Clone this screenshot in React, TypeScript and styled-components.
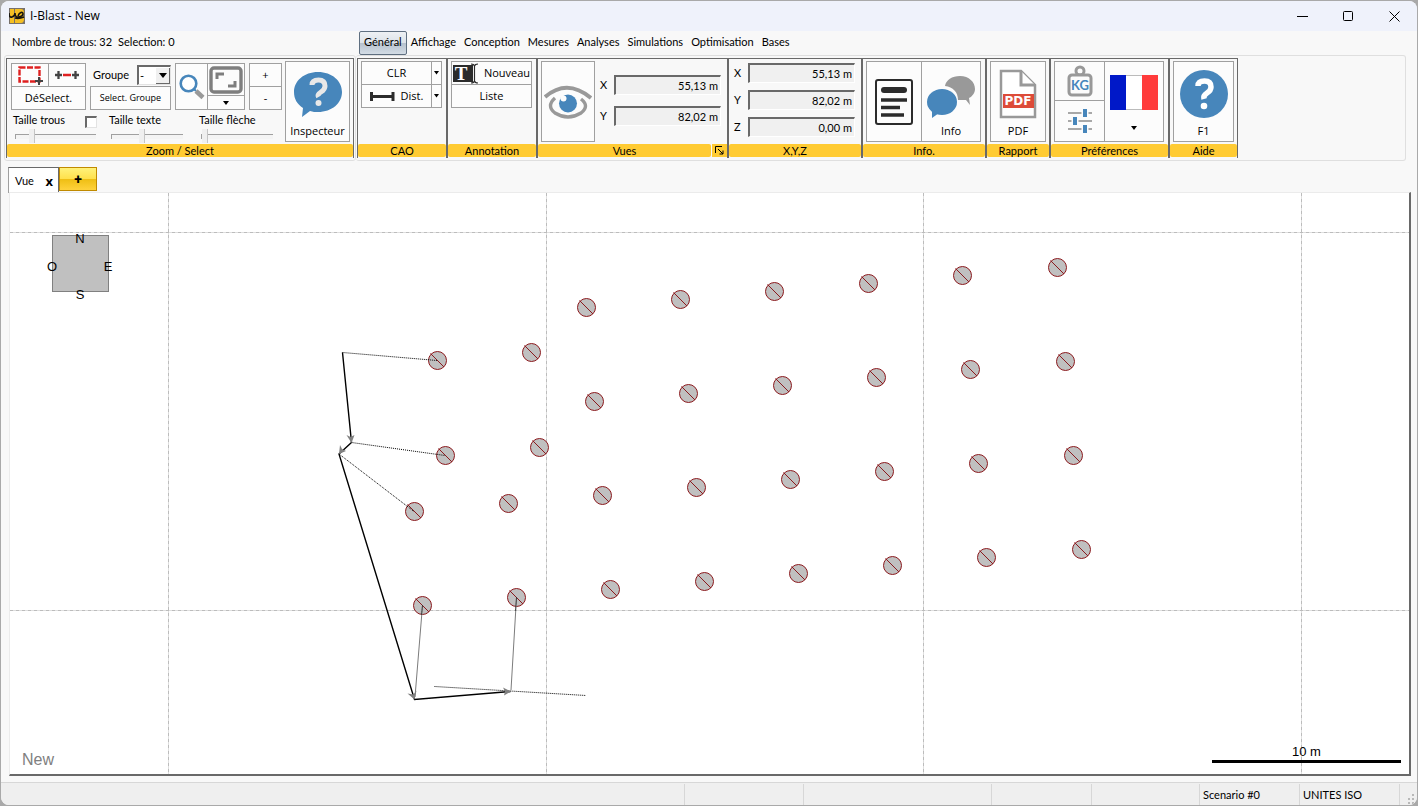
import React from "react";
import styled, { createGlobalStyle, css } from "styled-components";

const color = {
  frame: "#a9a9a9",
  chrome: "#f8f8f8",
  title: "#eff2fb",
  gold: "#ffcb33",
  line: "#a0a0a0",
  dark: "#696969",
  soft: "#dfdfdf",
  blue: "#4786bb",
  grey: "#999999",
};

const GlobalStyle = createGlobalStyle`
  * { box-sizing: border-box; }
  body {
    margin: 0;
    background: ${color.frame};
    font: 11px/14px Lato, "Liberation Sans", sans-serif;
    color: #000;
  }
  button, input, select { font: inherit; color: inherit; margin: 0; }
`;

const handFont = css`
  font-family: "Open Sans", "Noto Sans", sans-serif;
`;

/* ---------- window ---------- */

const Desktop = styled.div`
  display: flex;
  min-height: 100vh;
  padding: 1px;
`;

const Window = styled.div`
  flex: 1;
  min-width: 0;
  display: flex;
  flex-direction: column;
  background: ${color.chrome};
  border-radius: 8px;
  overflow: hidden;
`;

const TitleBar = styled.header`
  display: flex;
  align-items: center;
  height: 30px;
  padding-left: 8px;
  background: ${color.title};
`;

const Title = styled.h1`
  flex: 1;
  margin: 0 0 0 5px;
  font: 12px/16px "Open Sans", "Noto Sans", sans-serif;
`;

const WindowButton = styled.button`
  display: flex;
  align-items: center;
  justify-content: center;
  width: 46px;
  height: 30px;
  padding: 0;
  border: 0;
  background: none;
`;

/* ---------- menu ---------- */

const MenuRow = styled.div`
  display: flex;
  align-items: center;
  height: 24px;
`;

const Counters = styled.div`
  display: flex;
  gap: 6px;
  flex: 0 0 358px;
  padding: 0 0 2px 11px;
`;

const Menu = styled.nav`
  display: flex;
`;

const MenuTab = styled.button<{ $active?: boolean }>`
  height: 24px;
  padding: 0 3px 2px;
  border: 1px solid transparent;
  border-radius: 2px;
  background: none;
  white-space: nowrap;
  ${(p) =>
    p.$active &&
    css`
      padding: 0 4px 2px;
      border-color: #5f6f80;
      background: linear-gradient(#eef1f4 0%, #dde3e9 48%, #b6c1cd 50%, #d3dce5 100%);
    `}
`;

/* ---------- ribbon ---------- */

const Ribbon = styled.div`
  display: flex;
  padding: 0 11px 0 3px;
`;

const RibbonPanel = styled.div<{ $grow?: boolean }>`
  display: flex;
  padding: 2px 1px;
  border: 1px solid ${color.soft};
  border-radius: 3px;
  ${(p) => p.$grow && "flex: 1; border-left: 0;"}
`;

const Group = styled.section<{ $width: number }>`
  display: flex;
  flex-direction: column;
  width: ${(p) => p.$width}px;
  height: 100px;
  border: 1px solid ${color.dark};
  border-bottom: 0;
`;

const GroupBody = styled.div`
  flex: 1;
  display: flex;
  min-height: 0;
  padding: 2px 3px 0;
`;

const Caption = styled.footer`
  display: flex;
  flex: none;
  height: 13px;
  margin-bottom: 1px;
  gap: 1px;
`;

const CaptionText = styled.h2`
  flex: 1;
  margin: 0;
  border-radius: 2px;
  background: ${color.gold};
  font: inherit;
  text-align: center;
`;

const CaptionButton = styled.button`
  display: flex;
  align-items: center;
  justify-content: center;
  width: 15px;
  padding: 0;
  border: 0;
  background: ${color.gold};
`;

const Tool = styled.button<{ $w?: number; $h?: number; $small?: boolean }>`
  ${handFont}
  display: flex;
  flex-direction: column;
  align-items: center;
  justify-content: center;
  ${(p) => (p.$w ? `width: ${p.$w}px;` : "flex: 1;")}
  height: ${(p) => p.$h ?? 24}px;
  padding: 0;
  border: 1px solid ${color.line};
  background: #fcfcfc;
  font-size: ${(p) => (p.$small ? 9 : 11)}px;
  line-height: 14px;
  white-space: nowrap;
  & > svg { flex: none; }
`;

const ToolRow = styled.div`
  display: flex;
  & > * + * { margin-left: -1px; }
`;

const ToolStack = styled.div<{ $w: number }>`
  display: flex;
  flex-direction: column;
  width: ${(p) => p.$w}px;
  & > * + * { margin-top: -1px; }
  & > button { flex: none; width: 100%; }
`;

const BigTool = styled(Tool)`
  height: 81px;
  justify-content: flex-end;
  padding-bottom: 3px;
  gap: 5px;
`;

const Inline = styled.span`
  display: flex;
  align-items: center;
  gap: 6px;
`;

const SelectTools = styled.div`
  flex: 1;
  padding: 2px 0 0 1px;
`;

const SelectRow = styled.div`
  display: flex;
  gap: 4px;
`;

const GroupPick = styled.label`
  display: flex;
  align-items: center;
  justify-content: space-between;
  height: 24px;
  padding-left: 3px;
`;

const SelectBox = styled.span`
  display: flex;
  align-items: center;
  width: 34px;
  height: 20px;
  border: 1px solid #e3e3e3;
  border-top: 2px solid ${color.dark};
  border-left: 2px solid ${color.dark};
  background: #fff;
`;

const Select = styled.select`
  flex: 1;
  min-width: 0;
  height: 16px;
  padding: 0 0 0 1px;
  border: 0;
  appearance: none;
  background: transparent;
`;

const DropMark = styled.span`
  display: flex;
  align-items: center;
  justify-content: center;
  width: 14px;
  height: 16px;
  border-right: 1px solid ${color.dark};
  border-bottom: 1px solid ${color.dark};
  background: #f0f0f0;
`;

const Sliders = styled.div`
  display: grid;
  grid-template-columns: 96px 90px 80px;
  padding: 3px 0 0 2px;
`;

const SliderField = styled.div<{ $track: number }>`
  display: grid;
  grid-template-columns: ${(p) => p.$track}px;
  align-content: start;
`;

const SliderHead = styled.div`
  display: flex;
  justify-content: space-between;
  height: 16px;
  white-space: nowrap;
`;

const Check = styled.input`
  flex: none;
  width: 12px;
  height: 12px;
  margin: 3px -3px 0 0;
  appearance: none;
  border: 1px solid #e3e3e3;
  border-top: 2px solid ${color.dark};
  border-left: 2px solid ${color.dark};
  background: #fff;
`;

const Range = styled.input`
  width: 100%;
  height: 15px;
  margin-left: 2px;
  appearance: none;
  background: transparent;
  &::-webkit-slider-runnable-track {
    height: 5px;
    border-top: 1px solid ${color.line};
    border-left: 1px solid ${color.line};
    background: #f4f4f4;
  }
  &::-webkit-slider-thumb {
    appearance: none;
    width: 6px;
    height: 14px;
    margin-top: -6px;
    border-right: 1px solid #c4c4c4;
    background: #efefef;
  }
`;

const Fields = styled.div<{ $gap: number; $top: number; $left: number }>`
  flex: 1;
  display: flex;
  flex-direction: column;
  gap: ${(p) => p.$gap}px;
  padding: ${(p) => p.$top}px 3px 0 ${(p) => p.$left}px;
`;

const Coord = styled.label`
  display: grid;
  grid-template-columns: 14px 1fr;
  align-items: center;
`;

const CoordInput = styled.input`
  width: 100%;
  height: 20px;
  padding: 0 2px 1px;
  border: 1px solid #fff;
  border-top: 2px solid ${color.dark};
  border-left: 2px solid ${color.dark};
  background: #f0f0f0;
  text-align: right;
`;

/* ---------- view ---------- */

const Tabs = styled.div`
  display: flex;
  height: 31px;
  padding: 6px 0 0 7px;
`;

const ViewTab = styled.div`
  display: flex;
  align-items: center;
  justify-content: space-between;
  width: 51px;
  height: 26px;
  padding: 0 3px 0 6px;
  border: 1px solid ${color.dark};
  border-bottom: 0;
  border-left-color: ${color.line};
  background: #fff;
`;

const CloseTab = styled.button`
  padding: 0 2px;
  border: 0;
  background: none;
  font: 700 13px/14px "Open Sans", sans-serif;
`;

const AddTab = styled.button`
  width: 38px;
  height: 24px;
  padding: 0;
  border: 1px solid #c08a00;
  background: linear-gradient(#fff27a 0%, #ffe14d 48%, #efbf14 52%, #ffd23c 100%);
  font: 700 14px/14px Roboto, sans-serif;
`;

const Canvas = styled.main`
  position: relative;
  flex: 1;
  min-height: 360px;
  margin: 0 6px 6px 8px;
  border: 1px solid #ebebeb;
  border-right: 2px solid ${color.dark};
  border-bottom: 2px solid ${color.dark};
  background: #fff;
  overflow: hidden;
`;

const Plan = styled.svg`
  position: absolute;
  inset: 0;
  width: 100%;
  height: 100%;
  font: 13px "Liberation Sans", Arial, sans-serif;
`;

const ViewName = styled.span`
  position: absolute;
  left: 12px;
  bottom: 4px;
  color: #808080;
  font: 16px/20px "Liberation Sans", Arial, sans-serif;
`;

const Scale = styled.div`
  position: absolute;
  right: 8px;
  bottom: 11px;
  width: 189px;
  border-bottom: 3px solid #000;
  font: 13px/16px "Liberation Sans", Arial, sans-serif;
  text-align: center;
`;

/* ---------- status ---------- */

const StatusBar = styled.footer`
  display: flex;
  justify-content: flex-end;
  height: 23px;
  border-top: 1px solid #d7d7d7;
  background: #efefef;
`;

const StatusCell = styled.div<{ $w: number }>`
  width: ${(p) => p.$w}px;
  margin-top: 1px;
  padding: 4px 3px 0;
  border-left: 1px solid #d7d7d7;
  white-space: nowrap;
`;

const Grip = styled.svg`
  align-self: flex-end;
`;

const LangCaret = styled.span`
  display: flex;
  padding: 11px 0 8px;
`;

/* ---------- icons ---------- */

const Caret = ({ size = 6 }: { size?: number }) => (
  <svg width={size} height={size / 2 + 1} viewBox="0 0 8 4" preserveAspectRatio="none">
    <path d="M0 0h8L4 4z" fill="#000" />
  </svg>
);

const Logo = () => (
  <svg width="16" height="16" viewBox="0 0 16 16">
    <path d="M0 0h16v16H0z" fill="#77706a" />
    <path d="M1 1h4v14H1zM6 1h6q3 0 3 3.500q0 2-1 3q1 1 1 3.500q0 4-3 4H6z" fill="#f5bf22" />
    <path d="M0 5q0 5 3 4t3-4M6 5q0 5 4 4t4-3q0-2-2-1.500T9 8M6 10q4 1 9-1" fill="none" stroke="#17150f" strokeWidth="1.600" />
  </svg>
);

const MarqueeIcon = () => (
  <svg width="26" height="20" viewBox="0 0 26 20">
    <path d="M2.500 2.500h20v14h-20z" fill="none" stroke="#de2020" strokeWidth="2.400" strokeDasharray="6 1.500" />
    <path d="M22 12v8M18 16h8" stroke="#444" strokeWidth="2" />
  </svg>
);

const LinkPickIcon = () => (
  <svg width="26" height="12" viewBox="0 0 26 12">
    <path d="M9 6h8" stroke="#de2020" strokeWidth="2.500" />
    <path d="M1 6h7M18 6h7M4.500 2v8M21.500 2v8" stroke="#444" strokeWidth="2.300" />
  </svg>
);

const LensIcon = () => (
  <svg width="26" height="26" viewBox="0 0 26 26">
    <circle cx="9.500" cy="9.500" r="7.800" fill="#fff" stroke={color.blue} strokeWidth="2.600" />
    <path d="M15 15l2 2" stroke={color.blue} strokeWidth="2" />
    <path d="M17 17l7 6.500" stroke={color.grey} strokeWidth="4.500" />
  </svg>
);

const FitIcon = () => (
  <svg width="34" height="28" viewBox="0 0 34 28">
    <rect x="2" y="2" width="30" height="24" rx="3" fill="#fcfcfc" stroke="#7e7e7e" strokeWidth="3.400" />
    <path d="M8 13V8h7M26 15v5h-7" fill="none" stroke="#7e7e7e" strokeWidth="3" />
  </svg>
);

const HelpBubble = () => (
  <svg width="50" height="48" viewBox="0 0 50 48">
    <path d="M25 1C11 1 1 10 1 21c0 7 3 12 9 16l-1 9 8-6c3 1 5 1 8 1 14 0 24-9 24-20S39 1 25 1z" fill={color.blue} />
    <path d="M19 14q0-5 6.500-5t6.500 6q0 3.500-4 6T25.500 26" fill="none" stroke="#e8e8e8" strokeWidth="5" />
    <circle cx="25.500" cy="32" r="3" fill="#e8e8e8" />
  </svg>
);

const HelpDisc = () => (
  <svg width="50" height="50" viewBox="0 0 50 50">
    <circle cx="25" cy="25" r="24" fill={color.blue} />
    <path d="M19 17q0-5 6.500-5t6.500 6q0 3.500-4 6T25 30" fill="none" stroke="#fff" strokeWidth="5.500" />
    <circle cx="25" cy="37" r="3.300" fill="#fff" />
  </svg>
);

const DistIcon = () => (
  <svg width="25" height="9" viewBox="0 0 25 9">
    <path d="M1 4.500h23M1.500 0v9M23 0v9" stroke="#2b2b2b" strokeWidth="3" />
  </svg>
);

const TextIcon = () => (
  <svg width="25" height="21" viewBox="0 0 25 21">
    <path d="M0 2h22v17H0z" fill="#2b2b2b" />
    <text x="8" y="17" fill="#fff" fontFamily="Liberation Serif, serif" fontWeight="700" fontSize="19" textAnchor="middle">T</text>
    <path d="M21.500 1v19" stroke="#fff" strokeWidth="3" />
    <path d="M18 1q3 0 3.500 2Q22 1 25 1M18 20q3 0 3.500-2q.5 2 3.500 2M21.500 2v17" fill="none" stroke="#2b2b2b" strokeWidth="1.200" />
  </svg>
);

const EyeIcon = () => (
  <svg width="48" height="34" viewBox="0 0 48 34">
    <path d="M1 12Q23-7 47 13" fill="none" stroke={color.grey} strokeWidth="4" />
    <path d="M11 13Q2 21 11 28q13 8 26 0q9-7 0-14" fill="none" stroke={color.grey} strokeWidth="3.400" />
    <circle cx="24" cy="18.500" r="9" fill={color.blue} />
    <circle cx="19.500" cy="13.500" r="3" fill="#fcfcfc" />
  </svg>
);

const PageIcon = () => (
  <svg width="38" height="46" viewBox="0 0 38 46">
    <rect x="1" y="1" width="36" height="44" rx="2" fill="#fcfcfc" stroke="#2b2b2b" strokeWidth="2" />
    <path d="M9 11h20" stroke="#2b2b2b" strokeWidth="6" strokeLinecap="round" />
    <path d="M6 21h26M6 28.500h19M6 36h23" stroke="#2b2b2b" strokeWidth="3.600" />
  </svg>
);

const ChatIcon = () => (
  <svg width="50" height="44" viewBox="0 0 50 44">
    <path d="M34 1c-8 0-14 4-15 10 8 1 13 6 13 14l8 0 4 5-1-7c4-2 6-6 6-9 0-7-6-13-15-13z" fill={color.grey} />
    <ellipse cx="16" cy="27" rx="15" ry="13" fill={color.blue} />
    <path d="M6 35v8l7-5z" fill={color.blue} />
  </svg>
);

const PdfIcon = () => (
  <svg width="38" height="50" viewBox="0 0 38 50">
    <path d="M2 2h20l14 14v32H2z" fill="#fff" stroke={color.grey} strokeWidth="2.500" />
    <path d="M22 2v14h14" fill="#fff" stroke={color.grey} strokeWidth="3" />
    <path d="M4 25h31v14H4z" fill="#dd4b39" />
    <text x="19" y="36" fill="#fff" fontFamily="DejaVu Sans, sans-serif" fontWeight="700" fontSize="12" textAnchor="middle">PDF</text>
  </svg>
);

const WeightIcon = () => (
  <svg width="26" height="32" viewBox="0 0 26 32">
    <circle cx="13" cy="6" r="4" fill="none" stroke={color.grey} strokeWidth="3" />
    <rect x="2" y="10" width="22" height="20" rx="3" fill="#fcfcfc" stroke={color.grey} strokeWidth="3" />
    <text x="13" y="25" fill={color.blue} fontFamily="Lato, sans-serif" fontWeight="700" fontSize="13" textAnchor="middle">KG</text>
  </svg>
);

const TuneIcon = () => (
  <svg width="24" height="24" viewBox="0 0 24 24">
    <path d="M0 4h24M0 12h24M0 20h24" stroke="#a8a8a8" strokeWidth="2" />
    <path d="M17 0v8M7 8v8M17 16v8" stroke="#fcfcfc" strokeWidth="7" />
    <path d="M17 0v8M7 8v8M17 16v8" stroke={color.blue} strokeWidth="4" />
  </svg>
);

const FlagIcon = () => (
  <svg width="48" height="35" viewBox="0 0 48 35">
    <path d="M0 .5h48v34H0z" fill="#fff" stroke="#bbb" />
    <path d="M0 0h16v35H0z" fill="#0018c8" />
    <path d="M32 0h16v35H32z" fill="#ff3b3b" />
  </svg>
);

const LaunchIcon = () => (
  <svg width="9" height="9" viewBox="0 0 9 9">
    <path d="M.5 7V.500H7M3 3l5 5M8 4.500V8H4.500" fill="none" stroke="#000" />
  </svg>
);

const GripMark = () => (
  <Grip width="11" height="11" viewBox="0 0 11 11">
    <path d="M6 0h2v2H6zM6 4h2v2H6zM2 4h2v2H2zM6 8h2v2H6zM2 8h2v2H2z" fill="#b8b8b8" />
  </Grip>
);

/* ---------- plan data ---------- */

const holes: [number, number][] = [
  [576, 114], [670, 106], [764, 98], [858, 90], [952, 82], [1047, 74],
  [427, 167], [521, 159], [584, 208], [678, 200], [772, 192], [866, 184], [960, 176], [1055, 168],
  [435, 262], [529, 254], [592, 302], [686, 294], [780, 286], [874, 278], [968, 270], [1063, 262],
  [404, 318], [498, 310], [412, 412], [506, 404], [600, 396], [694, 388], [788, 380], [882, 372], [976, 364], [1071, 356],
];

const BlastPlan = () => (
  <Plan aria-label="Plan de tir">
    <g stroke="#dedede">
      {[158.5, 536.5, 913.5, 1291.5].map((x) => (
        <g key={x}>
          <line x1={x} x2={x} y1="0" y2="100%" />
          <line x1={x} x2={x} y1="0" y2="100%" stroke="#bcbcbc" strokeDasharray="3 3" />
        </g>
      ))}
      {[39.5, 417.5].map((y) => (
        <g key={y}>
          <line x1="0" x2="100%" y1={y} y2={y} />
          <line x1="0" x2="100%" y1={y} y2={y} stroke="#bcbcbc" strokeDasharray="3 3" />
        </g>
      ))}
    </g>
    <rect x="42.5" y="42.5" width="56" height="56" fill="#c0c0c0" stroke="#808080" />
    <g textAnchor="middle">
      <text x="70" y="50">N</text>
      <text x="42" y="78">O</text>
      <text x="98" y="78">E</text>
      <text x="70" y="106">S</text>
    </g>
    {holes.map(([x, y]) => (
      <g key={`${x}-${y}`} transform={`translate(${x} ${y})`} stroke="#8b1a1e">
        <circle cx=".5" cy=".5" r="9" fill="#c0c0c0" />
        <path d="M-6.500-6.500l13.500 13.500" />
      </g>
    ))}
    <g fill="none" stroke="#000">
      <path d="M332.500 159.500L427 167.500M341.500 249.500L435 262.500M329 261L404 318.500M424.500 493.500L576 502.500" strokeDasharray="1 1" />
      <path d="M412.500 412.500L405 504M506.500 404.500L501 497" stroke="#7c7c7c" />
      <path d="M412.500 412.500l-1 9M506.500 404.500l-1 13" strokeDasharray="1 1" />
      <path d="M332.500 159.500L341.500 249.500L329 261L404.500 506.500L500.500 498.500" strokeWidth="1.400" />
    </g>
    <g fill="#808080">
      <path d="M341.500 250l-5-8 4 2 4-2z" />
      <path d="M329 261l1-9 2 4 4 2z" />
      <path d="M404.500 506.500l-7-6 6 1 3-4z" />
      <path d="M501 498.500l-8-4 2 4-1 4z" />
    </g>
  </Plan>
);

const CoordField = ({ name, value }: { name: string; value: string }) => (
  <Coord>
    {name}
    <CoordInput defaultValue={value} />
  </Coord>
);

const SplitTool = ({ children }: { children: React.ReactNode }) => (
  <ToolRow>
    <Tool $w={71}>{children}</Tool>
    <Tool $w={11} aria-label="Options"><Caret size={5} /></Tool>
  </ToolRow>
);

export default function App() {
  return (
    <Desktop>
      <GlobalStyle />
      <Window>
        <TitleBar>
          <Logo />
          <Title>I-Blast - New</Title>
          <WindowButton aria-label="Réduire">
            <svg width="11" height="11"><path d="M0 5.500h11" stroke="#000" /></svg>
          </WindowButton>
          <WindowButton aria-label="Agrandir">
            <svg width="11" height="11"><rect x=".5" y=".5" width="9" height="9" rx="1" fill="none" stroke="#000" /></svg>
          </WindowButton>
          <WindowButton aria-label="Fermer">
            <svg width="11" height="11"><path d="M.5.5l10 10M10.500.5l-10 10" stroke="#000" /></svg>
          </WindowButton>
        </TitleBar>

        <MenuRow>
          <Counters>
            <span>Nombre de trous: 32</span>
            <span>Selection: 0</span>
          </Counters>
          <Menu>
            <MenuTab $active>Général</MenuTab>
            {["Affichage", "Conception", "Mesures", "Analyses", "Simulations", "Optimisation", "Bases"].map((m) => (
              <MenuTab key={m}>{m}</MenuTab>
            ))}
          </Menu>
        </MenuRow>

        <Ribbon>
          <RibbonPanel>
            <Group $width={348}>
              <GroupBody>
                <SelectTools>
                  <SelectRow>
                    <ToolStack $w={75}>
                      <ToolRow>
                        <Tool aria-label="Sélection rectangle"><MarqueeIcon /></Tool>
                        <Tool aria-label="Sélection ligne"><LinkPickIcon /></Tool>
                      </ToolRow>
                      <Tool>DéSelect.</Tool>
                    </ToolStack>
                    <ToolStack $w={81}>
                      <GroupPick>
                        Groupe
                        <SelectBox>
                          <Select defaultValue="-"><option>-</option></Select>
                          <DropMark><Caret size={8} /></DropMark>
                        </SelectBox>
                      </GroupPick>
                      <Tool $small>Select. Groupe</Tool>
                    </ToolStack>
                    <ToolRow>
                      <Tool $w={33} $h={47} aria-label="Zoom"><LensIcon /></Tool>
                      <ToolStack $w={38}>
                        <Tool $h={33} aria-label="Zoom étendu"><FitIcon /></Tool>
                        <Tool $h={15} aria-label="Options de zoom"><Caret /></Tool>
                      </ToolStack>
                    </ToolRow>
                    <ToolStack $w={33}>
                      <Tool>+</Tool>
                      <Tool>-</Tool>
                    </ToolStack>
                  </SelectRow>
                  <Sliders>
                    <SliderField $track={81}>
                      <SliderHead>
                        <label htmlFor="holes">Taille trous</label>
                        <Check type="checkbox" aria-label="Taille trous fixe" />
                      </SliderHead>
                      <Range id="holes" type="range" defaultValue={17} />
                    </SliderField>
                    <SliderField $track={72}>
                      <SliderHead><label htmlFor="texts">Taille texte</label></SliderHead>
                      <Range id="texts" type="range" defaultValue={42} />
                    </SliderField>
                    <SliderField $track={72}>
                      <SliderHead><label htmlFor="arrows">Taille flèche</label></SliderHead>
                      <Range id="arrows" type="range" defaultValue={0} />
                    </SliderField>
                  </Sliders>
                </SelectTools>
                <BigTool $w={65}><HelpBubble />Inspecteur</BigTool>
              </GroupBody>
              <Caption><CaptionText>Zoom / Select</CaptionText></Caption>
            </Group>
          </RibbonPanel>

          <RibbonPanel $grow>
            <Group $width={90}>
              <GroupBody>
                <ToolStack $w={81}>
                  <SplitTool>CLR</SplitTool>
                  <SplitTool><Inline><DistIcon />Dist.</Inline></SplitTool>
                </ToolStack>
              </GroupBody>
              <Caption><CaptionText>CAO</CaptionText></Caption>
            </Group>
            <Group $width={90}>
              <GroupBody>
                <ToolStack $w={81}>
                  <Tool><Inline><TextIcon />Nouveau</Inline></Tool>
                  <Tool>Liste</Tool>
                </ToolStack>
              </GroupBody>
              <Caption><CaptionText>Annotation</CaptionText></Caption>
            </Group>
            <Group $width={191}>
              <GroupBody>
                <Tool $w={54} $h={81} aria-label="Vues"><EyeIcon /></Tool>
                <Fields $gap={11} $top={14} $left={5}>
                  <CoordField name="X" value="55,13 m" />
                  <CoordField name="Y" value="82,02 m" />
                </Fields>
              </GroupBody>
              <Caption>
                <CaptionText>Vues</CaptionText>
                <CaptionButton aria-label="Options des vues"><LaunchIcon /></CaptionButton>
              </Caption>
            </Group>
            <Group $width={134}>
              <GroupBody>
                <Fields $gap={7} $top={2} $left={2}>
                  <CoordField name="X" value="55,13 m" />
                  <CoordField name="Y" value="82,02 m" />
                  <CoordField name="Z" value="0,00 m" />
                </Fields>
              </GroupBody>
              <Caption><CaptionText>X,Y,Z</CaptionText></Caption>
            </Group>
            <Group $width={124}>
              <GroupBody>
                <ToolRow>
                  <Tool $w={56} $h={81} aria-label="Rapport texte"><PageIcon /></Tool>
                  <BigTool $w={60}><ChatIcon />Info</BigTool>
                </ToolRow>
              </GroupBody>
              <Caption><CaptionText>Info.</CaptionText></Caption>
            </Group>
            <Group $width={64}>
              <GroupBody><BigTool><PdfIcon />PDF</BigTool></GroupBody>
              <Caption><CaptionText>Rapport</CaptionText></Caption>
            </Group>
            <Group $width={119}>
              <GroupBody>
                <ToolRow>
                  <ToolStack $w={51}>
                    <Tool $h={40} aria-label="Unités"><WeightIcon /></Tool>
                    <Tool $h={42} aria-label="Réglages"><TuneIcon /></Tool>
                  </ToolStack>
                  <BigTool $w={60} aria-label="Langue"><FlagIcon /><LangCaret><Caret /></LangCaret></BigTool>
                </ToolRow>
              </GroupBody>
              <Caption><CaptionText>Préférences</CaptionText></Caption>
            </Group>
            <Group $width={69}>
              <GroupBody><BigTool><HelpDisc />F1</BigTool></GroupBody>
              <Caption><CaptionText>Aide</CaptionText></Caption>
            </Group>
          </RibbonPanel>
        </Ribbon>

        <Tabs>
          <ViewTab>Vue <CloseTab aria-label="Fermer la vue">x</CloseTab></ViewTab>
          <AddTab>+</AddTab>
        </Tabs>

        <Canvas>
          <BlastPlan />
          <ViewName>New</ViewName>
          <Scale>10 m</Scale>
        </Canvas>

        <StatusBar>
          <StatusCell $w={119} />
          <StatusCell $w={188} />
          <StatusCell $w={100} />
          <StatusCell $w={108} />
          <StatusCell $w={100}>Scenario #0</StatusCell>
          <StatusCell $w={100}>UNITES ISO</StatusCell>
          <StatusCell $w={5} />
          <GripMark />
        </StatusBar>
      </Window>
    </Desktop>
  );
}
